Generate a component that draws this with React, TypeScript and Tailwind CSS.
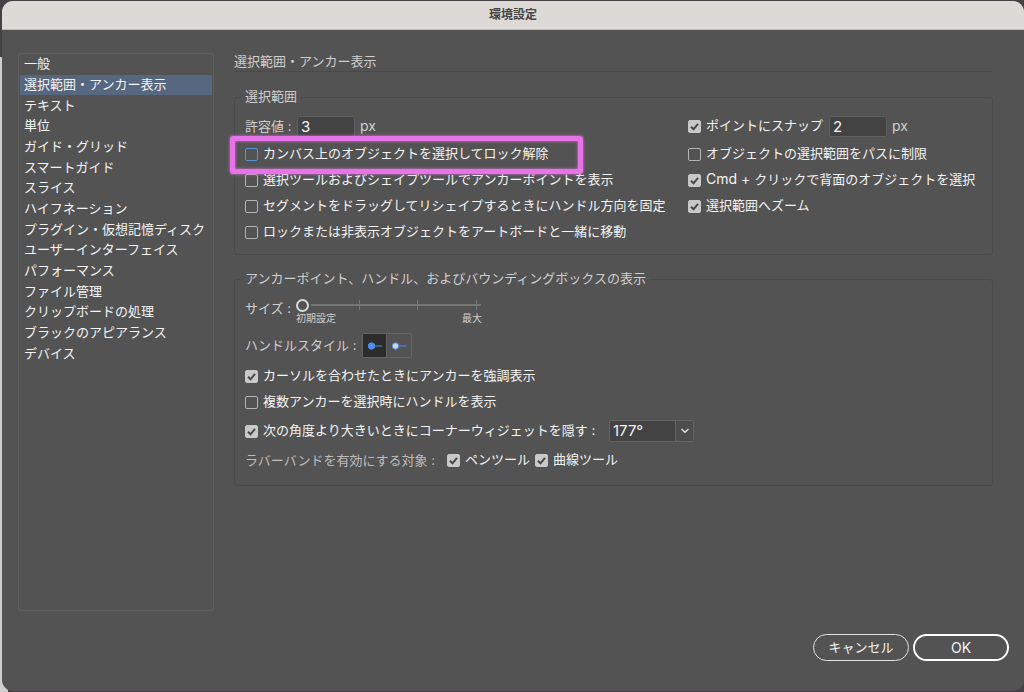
import { useState } from 'react'
import type { ReactNode } from 'react'
import clsx from 'clsx'

const CATEGORIES = [
  '一般',
  '選択範囲・アンカー表示',
  'テキスト',
  '単位',
  'ガイド・グリッド',
  'スマートガイド',
  'スライス',
  'ハイフネーション',
  'プラグイン・仮想記憶ディスク',
  'ユーザーインターフェイス',
  'パフォーマンス',
  'ファイル管理',
  'クリップボードの処理',
  'ブラックのアピアランス',
  'デバイス',
]

interface CheckFieldProps {
  children: ReactNode
  defaultChecked?: boolean
  focused?: boolean
  className?: string
}

function CheckField({ children, defaultChecked, focused, className }: CheckFieldProps) {
  return (
    <label className={clsx('flex items-center gap-[5px] whitespace-nowrap text-[#f4f4f4]', className)}>
      <span className="grid shrink-0">
        <input
          type="checkbox"
          defaultChecked={defaultChecked}
          className={clsx(
            'peer col-start-1 row-start-1 size-[13px] appearance-none rounded-[2px] border checked:border-[#c8c8c8] checked:bg-[#c8c8c8]',
            focused ? 'border-[#5b92dc]' : 'border-[#b4b4b4]'
          )}
        />
        <svg
          viewBox="0 0 13 13"
          className="pointer-events-none invisible col-start-1 row-start-1 size-[13px] peer-checked:visible"
          fill="none"
          stroke="#484848"
          strokeWidth="2"
        >
          <path d="M3 6.8 5.5 9.3 10 3.8" />
        </svg>
      </span>
      <span className="pb-0.5">{children}</span>
    </label>
  )
}

function NumberField({ id, value, label }: { id: string; value: string; label?: string }) {
  return (
    <div className="flex items-center gap-[5px]">
      <input
        id={id}
        type="text"
        defaultValue={value}
        aria-label={label}
        className="h-[21px] w-[58px] rounded-[2px] border border-[#5f5f5f] bg-[#434343] px-[3px] text-[15px] text-[#f4f4f4]"
      />
      <span className="text-[14px]">px</span>
    </div>
  )
}

function Group({ title, children, className }: { title: string; children: ReactNode; className?: string }) {
  return (
    <fieldset className={clsx('min-w-0 rounded-[3px] border border-[#4a4a4a] pl-[10px]', className)}>
      <legend className="-ml-1 px-1 pb-0.5 leading-[18px]">{title}</legend>
      {children}
    </fieldset>
  )
}

function SelectionGroup() {
  return (
    <Group title="選択範囲" className="mt-[15px] pb-[9px]">
      <div className="grid grid-cols-[443px_1fr] pt-[9px]">
        <div>
          <div className="mb-[5px] flex h-5 items-center gap-1">
            <label htmlFor="tolerance" className="min-w-12">許容値 :</label>
            <NumberField id="tolerance" value="3" />
          </div>
          <div className="relative">
            <CheckField focused className="h-[26px]">カンバス上のオブジェクトを選択してロック解除</CheckField>
            {/* 強調枠 */}
            <div className="pointer-events-none absolute -top-[5px] -left-[15px] h-[38px] w-[353px] rounded-[3px] border-5 border-[#e673e8] shadow-[0_0_3px_#e673e8,inset_0_0_3px_#e673e8]" />
          </div>
          <CheckField className="h-[26px]">選択ツールおよびシェイプツールでアンカーポイントを表示</CheckField>
          <CheckField className="h-[26px]">セグメントをドラッグしてリシェイプするときにハンドル方向を固定</CheckField>
          <CheckField className="h-[26px]">ロックまたは非表示オブジェクトをアートボードと一緒に移動</CheckField>
        </div>
        <div>
          <div className="mb-[5px] flex h-5 items-center gap-1">
            <CheckField defaultChecked className="min-w-[137px]">ポイントにスナップ</CheckField>
            <NumberField id="snap" value="2" label="ポイントにスナップ (px)" />
          </div>
          <CheckField className="h-[26px]">オブジェクトの選択範囲をパスに制限</CheckField>
          <CheckField defaultChecked className="h-[26px]">
            <span className="text-[14px]">Cmd + </span>クリックで背面のオブジェクトを選択
          </CheckField>
          <CheckField defaultChecked className="h-[26px]">選択範囲へズーム</CheckField>
        </div>
      </div>
    </Group>
  )
}

function SizeSlider() {
  return (
    <div className="flex items-start gap-1 pt-[9px]">
      <label htmlFor="size" className="min-w-[47px] leading-5">サイズ :</label>
      <div className="w-[186px]">
        <div className="grid">
          <svg viewBox="0 0 186 14" className="col-start-1 row-start-1 h-[14px] w-[186px]" stroke="#767676">
            <path d="M15 7H185" strokeWidth="2" />
            <path d="M63.5 2V12M121.5 2V12M180.5 2V12" />
          </svg>
          <input
            id="size"
            type="range"
            min={0}
            max={3}
            defaultValue={0}
            className="col-start-1 row-start-1 h-[14px] w-full appearance-none bg-transparent [&::-webkit-slider-thumb]:size-[13px] [&::-webkit-slider-thumb]:appearance-none [&::-webkit-slider-thumb]:rounded-full [&::-webkit-slider-thumb]:border-2 [&::-webkit-slider-thumb]:border-[#dcdcdc] [&::-webkit-slider-thumb]:bg-[#535353]"
          />
        </div>
        <div className="flex justify-between text-[10px] leading-3">
          <span>初期設定</span>
          <span>最大</span>
        </div>
      </div>
    </div>
  )
}

function HandleStyle() {
  const [style, setStyle] = useState(0)

  return (
    <div className="mt-[9px] flex h-[25px] items-center gap-1">
      <span className="min-w-[113px] pb-0.5">ハンドルスタイル :</span>
      <div className="flex rounded-[2px] border border-[#646464]">
        {['#4b90f0', '#d4d4d4'].map((fill, i) => (
          <button
            key={fill}
            type="button"
            aria-label={i === 0 ? '塗りハンドル' : '白抜きハンドル'}
            onClick={() => setStyle(i)}
            className={clsx(
              'flex h-[23px] items-center justify-center',
              i === 0 ? 'w-[23px]' : 'w-[25px] border-l border-[#646464]',
              style === i && 'bg-[#2c2c2c]'
            )}
          >
            <svg width="16" height="10" viewBox="0 0 16 10">
              <path d="M5 5H15" stroke="#4b90f0" />
              <circle cx="4.5" cy="5" r="3.2" fill={fill} stroke="#4b90f0" />
            </svg>
          </button>
        ))}
      </div>
    </div>
  )
}

function AnchorGroup() {
  return (
    <Group title="アンカーポイント、ハンドル、およびバウンディングボックスの表示" className="mt-[14px] pb-[15px]">
      <SizeSlider />
      <HandleStyle />
      <CheckField defaultChecked className="mt-[5px] h-[26px]">カーソルを合わせたときにアンカーを強調表示</CheckField>
      <CheckField className="h-[26px]">複数アンカーを選択時にハンドルを表示</CheckField>
      <div className="mt-[5px] flex h-[22px] items-center gap-1">
        <CheckField defaultChecked className="min-w-[360px]">次の角度より大きいときにコーナーウィジェットを隠す :</CheckField>
        <div className="grid w-[85px]">
          <select
            aria-label="角度"
            defaultValue="177"
            className="col-start-1 row-start-1 h-[22px] w-full appearance-none rounded-[2px] border border-[#646464] bg-[#434343] px-[3px] text-[15px] text-[#f4f4f4]"
          >
            <option value="177">177°</option>
          </select>
          <span className="pointer-events-none col-start-1 row-start-1 my-px mr-px flex w-[18px] items-center justify-center justify-self-end border-l border-[#646464] bg-[#4d4d4d]">
            <svg width="10" height="6" viewBox="0 0 10 6" fill="none" stroke="#e6e6e6" strokeWidth="1.3">
              <path d="M1.5 1 5 4.3 8.5 1" />
            </svg>
          </span>
        </div>
      </div>
      <div className="mt-2 flex h-5 items-center gap-1">
        <span className="min-w-[198px] text-[#bdbdbd]">ラバーバンドを有効にする対象 :</span>
        <CheckField defaultChecked className="min-w-[84px]">ペンツール</CheckField>
        <CheckField defaultChecked>曲線ツール</CheckField>
      </div>
    </Group>
  )
}

export default function App() {
  const [selected, setSelected] = useState(1)

  return (
    <div className="flex min-h-screen bg-[#454145] bg-[linear-gradient(to_right,#cfcfcf_8px,transparent_8px)] bg-[position:0_57px] bg-no-repeat pt-px pb-px pl-[2px] font-['Inter','Noto_Sans_CJK_JP',sans-serif] text-[13px] leading-5 text-[#cfcfcf]">
      <div className="flex flex-1 flex-col overflow-hidden rounded-[11px] bg-[#535353]">
        <header className="flex h-[29px] items-center justify-center border-b border-[#b9b9b9] bg-[#ddd9d6]">
          <h1 className="text-[12px] font-bold text-[#474543]">環境設定</h1>
        </header>

        <div className="flex flex-1 gap-5 pt-[23px] pr-[31px] pl-4">
          {/* カテゴリー一覧 */}
          <nav className="w-[196px] shrink-0 rounded-[2px] border border-[#5f5f5f] px-px">
            <ul className="grid h-[310px] auto-rows-fr">
              {CATEGORIES.map((category, i) => (
                <li key={category} className="grid min-h-0">
                  <button
                    type="button"
                    onClick={() => setSelected(i)}
                    className={clsx(
                      'flex items-center px-1 pb-0.5 text-left leading-[18px] whitespace-nowrap text-[#f4f4f4]',
                      selected === i && 'bg-[#56677f]'
                    )}
                  >
                    {category}
                  </button>
                </li>
              ))}
            </ul>
          </nav>

          <main className="min-w-0 flex-1">
            <h2 className="border-b border-[#4a4a4a] pb-0.5 leading-4">選択範囲・アンカー表示</h2>
            <SelectionGroup />
            <AnchorGroup />
          </main>
        </div>

        <footer className="flex justify-end gap-1 pt-[23px] pr-[15px] pb-[30px]">
          <button type="button" className="h-[27px] w-24 rounded-full border border-[#e2e2e2] pb-0.5 text-[#f4f4f4]">
            キャンセル
          </button>
          <button type="button" className="h-[27px] w-24 rounded-full border-2 border-white text-[14px] text-[#f4f4f4]">
            OK
          </button>
        </footer>
      </div>
    </div>
  )
}
